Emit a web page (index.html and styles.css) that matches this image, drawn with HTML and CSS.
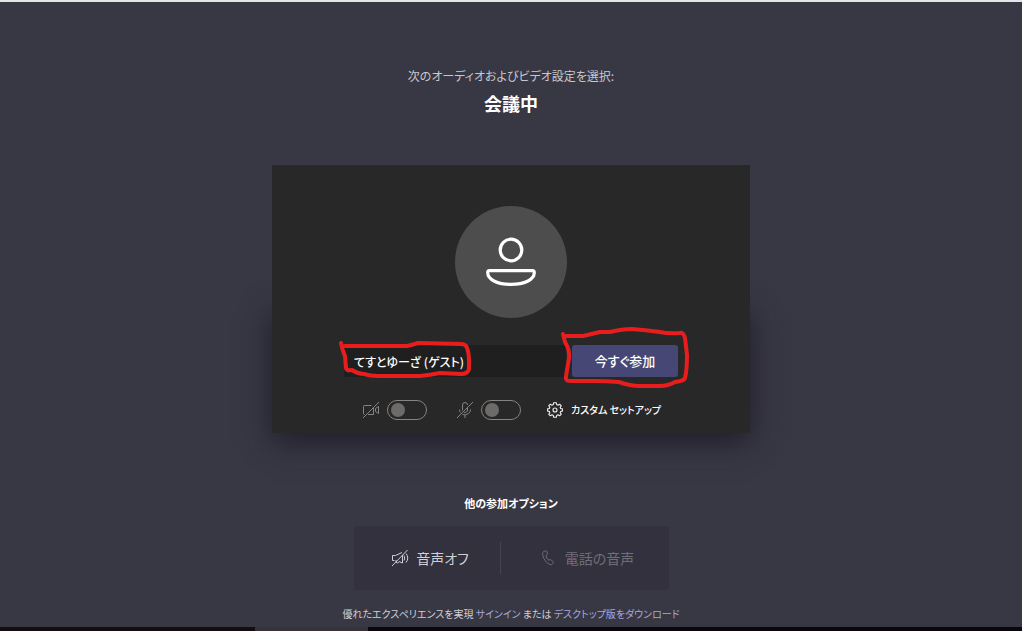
FILE: index.html
```html
<!DOCTYPE html>
<html lang="ja">
<head>
<meta charset="utf-8">
<meta name="viewport" content="width=device-width, initial-scale=1">
<title>会議に参加</title>
<link rel="stylesheet" href="styles.css">
</head>
<body>
<main class="prejoin">
  <header class="heading">
    <p class="heading-sub">次のオーディオおよびビデオ設定を選択:</p>
    <h1 class="heading-title">会議中</h1>
  </header>

  <section class="card">
    <div class="avatar">
      <svg width="112" height="112" viewBox="0 0 112 112" fill="none" stroke="#fff" stroke-width="3.2" aria-hidden="true">
        <circle cx="56" cy="44" r="10.8"/>
        <path d="M34.500 64.600H77.500Q79.300 64.600 79.300 66.500C79.300 74 69 78.400 56 78.400S32.700 74 32.700 66.500Q32.700 64.600 34.500 64.600Z"/>
      </svg>
    </div>
    <form class="join">
      <input class="name" type="text" value="てすとゆーざ (ゲスト)" aria-label="名前">
      <button class="join-button" type="button">今すぐ参加</button>
    </form>
    <div class="devices">
      <label class="device">
        <svg width="16" height="16" viewBox="0 0 16 16" fill="none" stroke="#858483" aria-label="カメラ">
          <path d="M8.500 3.500H1.500Q.5 3.500 .5 4.500V11.500Q.5 12.500 1.500 12.500M5 12.500H10.500V5.500M15.500 4.500V11.500L12.500 9.500V6.500ZM0 16L16 0"/>
        </svg>
        <input class="toggle" type="checkbox">
      </label>
      <label class="device">
        <svg width="16" height="16" viewBox="0 0 16 16" fill="none" stroke="#858483" aria-label="マイク">
          <path d="M10.500 3A2.500 2.500 0 0 0 5.500 3V8.500M7 10.300A2.500 2.500 0 0 0 10.500 8V6M2.500 7.500Q2.500 9.500 3.500 10.500M5.500 12.500Q9 13.500 11.500 11.500Q13.500 10 13.500 7.500M8 13V16M0 16L16 0"/>
        </svg>
        <input class="toggle" type="checkbox">
      </label>
      <button class="setup" type="button">
        <svg width="16" height="16" viewBox="0 0 16 16" fill="none" stroke="#f3f2f1" stroke-width="1.100" stroke-linejoin="round" aria-hidden="true">
          <path d="M6.300 2.600L6.700 .7H9.300L9.700 2.600L11 3.200L12.700 2.200L14.300 3.800L13.200 5.400L13.600 6.500L15.400 6.900V9.100L13.600 9.500L13.200 10.600L14.300 12.200L12.700 13.800L11 12.800L9.700 13.400L9.300 15.300H6.700L6.300 13.400L5 12.800L3.300 13.800L1.700 12.200L2.800 10.600L2.400 9.500L.6 9.100V6.900L2.400 6.500L2.800 5.400L1.700 3.800L3.300 2.200L5 3.200Z"/>
          <circle cx="8" cy="8" r="2"/>
        </svg>
        <span>カスタム セットアップ</span>
      </button>
    </div>
    <svg class="marks" width="478" height="268" viewBox="272 165 478 268" fill="none" stroke="#e81e1e" stroke-width="4" stroke-linecap="round" stroke-linejoin="round" aria-hidden="true">
      <path d="M341 343Q342 349 345 356L346 368Q347 371 352 370Q358 374 364 374Q370 376 378 376H420Q430 375 440 373L461 374Q468 374 469 369V361Q469 353 467 348Q466 344 461 344L418 343Q412 345 407 346H345"/>
      <path d="M563 334L565 342Q570 350 569 358L566 376Q565 381 570 381H593Q607 381 619 382Q630 386 640 386H660Q668 386 675 382Q684 381 685 378Q687 370 687 355L685 338Q683 332 680 333Q668 334 660 332Q645 330 632 329Q622 329 610 332L600 332L583 336H566"/>
    </svg>
  </section>

  <section class="options">
    <h2 class="options-title">他の参加オプション</h2>
    <div class="options-box">
      <button class="option" type="button">
        <svg width="18" height="16" viewBox="0 0 18 16" fill="none" stroke="currentColor" aria-hidden="true">
          <path d="M11 2.500L4.500 5.500H1.500V10.500H3.500M8 11.500L11.500 13V5M5 10V12Q6 14 8 12M13 5.500Q14.500 8 13 10.500M15 3.500Q18.500 8 15 12.500M1 16L16.500 0"/>
        </svg>
        <span>音声オフ</span>
      </button>
      <button class="option option-disabled" type="button" disabled>
        <svg width="13" height="16" viewBox="0 0 13 16" fill="none" stroke="currentColor" aria-hidden="true">
          <path d="M1.300 1.800L3.600 .8Q4.400 .6 4.800 1.400L5.500 3.600Q5.600 4.300 5 4.800L3.900 5.700Q4.200 8 6.700 10.200L8.200 9.700Q9 9.500 9.500 10.100L11.200 12Q11.600 12.600 11.100 13.200L10 14.400Q9.400 15 8.500 14.700C4.500 13.600 .6 8 .6 3.300Q.6 2.100 1.300 1.800Z"/>
        </svg>
        <span>電話の音声</span>
      </button>
    </div>
    <p class="promo">優れたエクスペリエンスを実現 <a href="#">サインイン</a> または <a href="#">デスクトップ版をダウンロード</a></p>
  </section>
</main>
<div class="desktop-edge"></div>
</body>
</html>
```
FILE: styles.css
```css
* {
  box-sizing: border-box;
}

body {
  margin: 0;
  min-height: 100vh;
  display: flex;
  flex-direction: column;
  border-top: 2px solid #e1e5e8;
  background: #383744;
  color: #fff;
  font-family: "Noto Sans CJK JP", sans-serif;
  font-size: 14px;
  line-height: 20px;
  font-feature-settings: "palt";
}

button,
input {
  margin: 0;
  font: inherit;
  font-feature-settings: inherit;
  color: inherit;
}

button {
  border: 0;
  padding: 0;
  background: none;
}

p,
h1,
h2 {
  margin: 0;
}

svg {
  flex: none;
}

.prejoin {
  flex: 1;
  display: flex;
  flex-direction: column;
  align-items: center;
  padding: 64px 16px 3px;
}

.heading {
  text-align: center;
}

.heading-sub {
  font-size: 12px;
  color: #c8c8cc;
}

.heading-title {
  margin-top: 4px;
  font-size: 18px;
  line-height: 26px;
}

.card {
  position: relative;
  width: 100%;
  max-width: 478px;
  margin-top: 49px;
  padding: 41px 72px 13px;
  background: #292828;
}

.card::before {
  content: "";
  position: absolute;
  z-index: -1;
  inset: 140px 0 0;
  box-shadow: 0 8px 28px #1e1d28;
}

.avatar {
  width: 112px;
  height: 112px;
  margin: 0 auto;
  border-radius: 50%;
  background: #4d4d4d;
}

.join {
  display: flex;
  gap: 6px;
  margin-top: 27px;
}

.name {
  flex: 1;
  min-width: 0;
  height: 32px;
  padding: 0 10px;
  border: 0;
  border-radius: 3px;
  background: #1f1f1f;
  font-size: 12px;
  font-weight: 500;
}

.join-button {
  width: 106px;
  height: 32px;
  border-radius: 3px;
  background: #464775;
  font-size: 13px;
  font-weight: 500;
}

.devices {
  display: flex;
  align-items: center;
  margin-top: 23px;
  padding-left: 19px;
}

.device {
  display: flex;
  align-items: center;
  gap: 8px;
  margin-right: 30px;
}

.device:nth-child(2) {
  margin-right: 26px;
}

.toggle {
  appearance: none;
  display: flex;
  align-items: center;
  width: 40px;
  height: 20px;
  padding: 0 3px;
  border: 1px solid #858483;
  border-radius: 10px;
}

.toggle::before {
  content: "";
  width: 14px;
  height: 14px;
  border-radius: 50%;
  background: #6c6b6a;
}

.setup {
  display: flex;
  align-items: center;
  gap: 8px;
  font-size: 10px;
  font-weight: 500;
  white-space: nowrap;
}

.marks {
  position: absolute;
  inset: 0;
  overflow: visible;
  pointer-events: none;
}

.options {
  display: flex;
  flex-direction: column;
  align-items: center;
  width: 100%;
  margin-top: 60px;
}

.options-title {
  font-size: 11px;
}

.options-box {
  display: flex;
  width: 100%;
  max-width: 315px;
  margin-top: 13px;
  padding: 16px 0;
  border-radius: 3px;
  background: #32313d;
}

.option {
  display: flex;
  flex: 147;
  align-items: center;
  justify-content: center;
  gap: 7px;
  height: 32px;
  padding-left: 6px;
  color: #d0d0d4;
}

.option-disabled {
  flex: 168;
  gap: 10px;
  border-left: 1px solid #454450;
  color: #6f6e79;
}

.promo {
  margin-top: 14px;
  font-size: 10px;
  color: #d0d0d2;
}

.promo a {
  color: #a6a7dc;
  text-decoration: none;
}

.desktop-edge {
  height: 4px;
  background: linear-gradient(90deg, #140d0c 25%, #383435 25% 36%, #0b0708 36%);
}
```
